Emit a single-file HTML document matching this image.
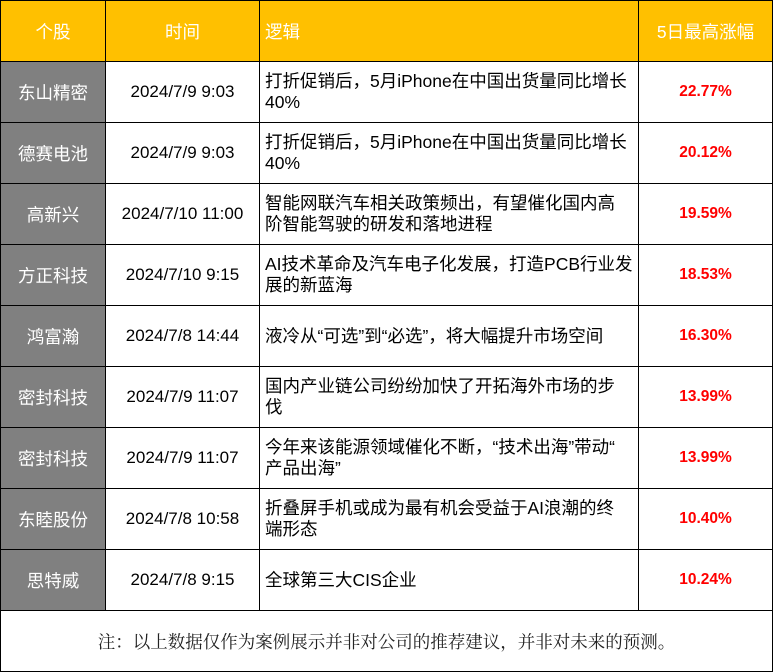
<!DOCTYPE html>
<html><head><meta charset="utf-8"><style>
body{margin:0;width:773px;height:672px;background:#fff;overflow:hidden;font-family:"Liberation Sans","Noto Sans CJK SC",sans-serif;}
table{position:absolute;left:0;top:0;border-collapse:collapse;table-layout:fixed;width:772px;}
td{border:1.5px solid #000;height:60px;padding:0;font-size:17px;color:#000;}
tr.h td{background:#FFC000;color:#fff;text-align:center;font-size:17.5px;}
tr.h td.l{text-align:left;padding-left:5px;}
td.n{background:#808080;color:#fff;text-align:center;font-size:17.5px;}
td.t{text-align:center;}
td.x{padding-left:5px;line-height:21px;font-size:17.5px;}
td.p{color:#f00;text-align:center;font-weight:bold;font-size:15.5px;}
td.f{text-align:center;font-family:"Liberation Serif","Noto Serif CJK SC",serif;font-size:17.5px;color:#222;}
</style></head><body>
<table>
<col style="width:105px"><col style="width:154px"><col style="width:379px"><col style="width:134px">
<tr class="h"><td>个股</td><td>时间</td><td class="l">逻辑</td><td>5日最高涨幅</td></tr>
<tr><td class="n">东山精密</td><td class="t">2024/7/9 9:03</td><td class="x">打折促销后，5月iPhone在中国出货量同比增长<br>40%</td><td class="p">22.77%</td></tr>
<tr><td class="n">德赛电池</td><td class="t">2024/7/9 9:03</td><td class="x">打折促销后，5月iPhone在中国出货量同比增长<br>40%</td><td class="p">20.12%</td></tr>
<tr><td class="n">高新兴</td><td class="t">2024/7/10 11:00</td><td class="x">智能网联汽车相关政策频出，有望催化国内高<br>阶智能驾驶的研发和落地进程</td><td class="p">19.59%</td></tr>
<tr><td class="n">方正科技</td><td class="t">2024/7/10 9:15</td><td class="x">AI技术革命及汽车电子化发展，打造PCB行业发<br>展的新蓝海</td><td class="p">18.53%</td></tr>
<tr><td class="n">鸿富瀚</td><td class="t">2024/7/8 14:44</td><td class="x">液冷从“可选”到“必选”，将大幅提升市场空间</td><td class="p">16.30%</td></tr>
<tr><td class="n">密封科技</td><td class="t">2024/7/9 11:07</td><td class="x">国内产业链公司纷纷加快了开拓海外市场的步<br>伐</td><td class="p">13.99%</td></tr>
<tr><td class="n">密封科技</td><td class="t">2024/7/9 11:07</td><td class="x">今年来该能源领域催化不断，“技术出海”带动“<br>产品出海”</td><td class="p">13.99%</td></tr>
<tr><td class="n">东睦股份</td><td class="t">2024/7/8 10:58</td><td class="x">折叠屏手机或成为最有机会受益于AI浪潮的终<br>端形态</td><td class="p">10.40%</td></tr>
<tr><td class="n">思特威</td><td class="t">2024/7/8 9:15</td><td class="x">全球第三大CIS企业</td><td class="p">10.24%</td></tr>
<tr><td class="f" colspan="4">注：以上数据仅作为案例展示并非对公司的推荐建议，并非对未来的预测。</td></tr>
</table>
</body></html>
